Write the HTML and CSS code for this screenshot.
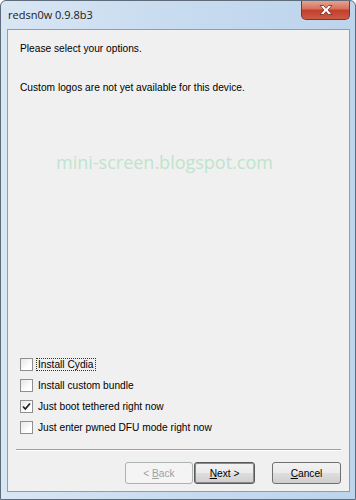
FILE: index.html
```html
<!DOCTYPE html>
<html>
<head>
<meta charset="utf-8">
<link rel="stylesheet" href="styles.css">
</head>
<body>
<div class="window">
  <div class="titlebar">
    <span class="title">redsn0w 0.9.8b3</span>
    <div class="close">
      <svg width="18" height="12" viewBox="0 0 18 12">
        <path d="M3 1.5 L6.5 1.5 L9 4.3 L11.5 1.5 L15 1.5 L11 6 L15 10.5 L11.5 10.5 L9 7.7 L6.5 10.5 L3 10.5 L7 6 Z" fill="#ffffff" stroke="#6b2a20" stroke-width="0.8" stroke-linejoin="round"/>
      </svg>
    </div>
  </div>
  <div class="client">
    <p class="msg first">Please select your options.</p>
    <p class="msg second">Custom logos are not yet available for this device.</p>
    <p class="watermark">mini-screen.blogspot.com</p>
    <div class="spacer"></div>
    <ul class="options">
      <li><span class="box"></span><span class="label focus">Install Cydia</span></li>
      <li><span class="box"></span><span class="label">Install custom bundle</span></li>
      <li><span class="box checked"><svg width="9" height="9" viewBox="0 0 9 9"><path d="M1 4.5 L3.3 7 L8 1.5" fill="none" stroke="#1f1f1f" stroke-width="1.7"/></svg></span><span class="label">Just boot tethered right now</span></li>
      <li><span class="box"></span><span class="label">Just enter pwned DFU mode right now</span></li>
    </ul>
    <div class="separator"></div>
    <div class="buttons">
      <button class="btn back" disabled>&lt; <u>B</u>ack</button>
      <button class="btn next"><u>N</u>ext &gt;</button>
      <button class="btn cancel"><u>C</u>ancel</button>
    </div>
  </div>
</div>
</body>
</html>
```
FILE: styles.css
```css
html, body {
  margin: 0;
  padding: 0;
  background: #ffffff;
}

.window {
  width: 356px;
  height: 500px;
  box-sizing: border-box;
  display: flex;
  flex-direction: column;
  border: 1px solid #5d6b7a;
  border-radius: 6px 6px 0 0;
  background: linear-gradient(90deg, #d9e6f4 0%, #c9dcf0 45%, #bcd4ec 100%);
  overflow: hidden;
}

.titlebar {
  height: 28px;
  flex: none;
  display: flex;
  align-items: flex-start;
  justify-content: space-between;
  padding-left: 7px;
}

.title {
  font-family: "Open Sans", "Noto Sans", sans-serif;
  font-size: 11px;
  color: #1a1a1a;
  margin-top: 6px;
}

.close {
  width: 49px;
  height: 20px;
  margin-right: 5px;
  margin-top: -1px;
  box-sizing: border-box;
  border: 1px solid #6e3b36;
  border-top: none;
  border-radius: 0 0 5px 5px;
  background: linear-gradient(180deg, #e8a898 0%, #d9725c 45%, #c43f2b 55%, #cc5a43 100%);
  display: flex;
  align-items: center;
  justify-content: center;
}

.client {
  flex: 1;
  margin: 0 5px 7px 6px;
  border: 1px solid #8c9eb2;
  background: #f0f0f0;
  display: flex;
  flex-direction: column;
  font-family: "Liberation Sans", Arial, sans-serif;
  font-size: 10.2px;
  color: #000000;
}

.msg {
  margin: 0;
  padding-left: 12px;
  line-height: 13px;
}

.first {
  margin-top: 12px;
}

.second {
  margin-top: 26px;
}

.watermark {
  margin: 57px 0 0 48px;
  font-family: "Open Sans", "Noto Sans", sans-serif;
  font-size: 18px;
  line-height: 22px;
  color: #bfe4cd;
}

.spacer {
  flex: 1;
}

.options {
  list-style: none;
  margin: 0;
  padding: 0 0 0 12px;
  display: flex;
  flex-direction: column;
}

.options li {
  height: 21px;
  display: flex;
  align-items: center;
}

.box {
  width: 13px;
  height: 13px;
  box-sizing: border-box;
  border: 1px solid #8e8f8f;
  background: linear-gradient(135deg, #e6e6e6 0%, #ffffff 70%);
  margin-right: 3px;
  display: flex;
  align-items: center;
  justify-content: center;
}

.label {
  padding: 0 1px;
  border: 1px solid transparent;
}

.label.focus {
  border: 1px dotted #333333;
}

.separator {
  height: 1px;
  margin: 11px 8px 0 8px;
  background: #a0a0a0;
  border-bottom: 1px solid #ffffff;
}

.buttons {
  display: flex;
  justify-content: flex-end;
  padding: 11px 8px 7px 0;
}

.btn {
  height: 22px;
  box-sizing: border-box;
  font-family: "Liberation Sans", Arial, sans-serif;
  font-size: 10.2px;
  color: #000000;
  border: 1px solid #707070;
  border-radius: 3px;
  background: linear-gradient(180deg, #f2f2f2 0%, #ebebeb 48%, #dddddd 52%, #cfcfcf 100%);
  padding: 0;
}

.back {
  width: 68px;
  color: #a0a0a0;
  border-color: #adb2b5;
  background: #f4f4f4;
}

.next {
  width: 61px;
  margin-left: 1px;
  border-color: #5a5a5a;
  box-shadow: inset 0 0 0 1px #8a8a8a;
}

.cancel {
  width: 69px;
  margin-left: 17px;
}
```
